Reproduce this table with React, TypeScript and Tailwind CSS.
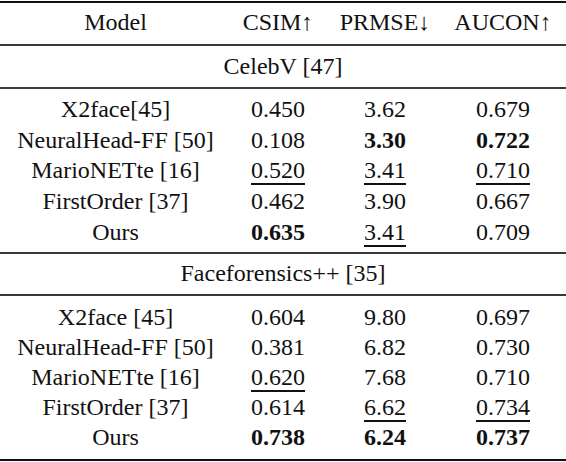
import React from 'react';

type Cell = { v: string; b?: boolean; u?: boolean };
type Row = { name: string; cells: Cell[] };

const celebv: Row[] = [
  { name: 'X2face[45]', cells: [{ v: '0.450' }, { v: '3.62' }, { v: '0.679' }] },
  { name: 'NeuralHead-FF [50]', cells: [{ v: '0.108' }, { v: '3.30', b: true }, { v: '0.722', b: true }] },
  { name: 'MarioNETte [16]', cells: [{ v: '0.520', u: true }, { v: '3.41', u: true }, { v: '0.710', u: true }] },
  { name: 'FirstOrder [37]', cells: [{ v: '0.462' }, { v: '3.90' }, { v: '0.667' }] },
  { name: 'Ours', cells: [{ v: '0.635', b: true }, { v: '3.41', u: true }, { v: '0.709' }] },
];

const faceforensics: Row[] = [
  { name: 'X2face [45]', cells: [{ v: '0.604' }, { v: '9.80' }, { v: '0.697' }] },
  { name: 'NeuralHead-FF [50]', cells: [{ v: '0.381' }, { v: '6.82' }, { v: '0.730' }] },
  { name: 'MarioNETte [16]', cells: [{ v: '0.620', u: true }, { v: '7.68' }, { v: '0.710' }] },
  { name: 'FirstOrder [37]', cells: [{ v: '0.614' }, { v: '6.62', u: true }, { v: '0.734', u: true }] },
  { name: 'Ours', cells: [{ v: '0.738', b: true }, { v: '6.24', b: true }, { v: '0.737', b: true }] },
];

const grid = 'grid grid-cols-[231px_94px_120px_116px] items-center';

const Rule = ({ thick }: { thick?: boolean }) => (
  <div className={thick ? 'h-[2px] bg-[#111]' : 'h-[2px] bg-[#3a3a3a]'} />
);

const DataRow = ({ row, h }: { row: Row; h: string }) => (
  <div className={`${grid} ${h}`}>
    <div className="text-center">{row.name}</div>
    {row.cells.map((c, i) => (
      <div key={i} className="text-center">
        <span
          className={`${c.b ? 'font-bold' : ''} ${
            c.u ? 'underline underline-offset-[5px] decoration-[1.5px]' : ''
          }`}
        >
          {c.v}
        </span>
      </div>
    ))}
  </div>
);

export default function App() {
  return (
    <div className="w-[566px] h-[462px] bg-white text-[#111] text-[24px] leading-none overflow-hidden font-['Liberation_Serif','DejaVu_Serif',serif]">
      <div className="pt-[1px]">
        <Rule thick />
        <div className={`${grid} h-[41px] pb-[3px]`}>
          <div className="text-center">Model</div>
          <div className="text-center">CSIM↑</div>
          <div className="text-center">PRMSE↓</div>
          <div className="text-center">AUCON↑</div>
        </div>
        <Rule />
        <div className="h-[41px] pb-[2px] flex items-center justify-center">CelebV [47]</div>
        <Rule />
        <div className="pt-[5px] pb-[5px]">
          {celebv.map((r) => (
            <DataRow key={r.name} row={r} h="h-[30.6px]" />
          ))}
        </div>
        <Rule />
        <div className="h-[40px] pb-[1px] flex items-center justify-center">Faceforensics++ [35]</div>
        <Rule />
        <div className="pt-[6px] pb-[7px]">
          {faceforensics.map((r) => (
            <DataRow key={r.name + 'f'} row={r} h="h-[30px]" />
          ))}
        </div>
        <Rule thick />
      </div>
    </div>
  );
}
